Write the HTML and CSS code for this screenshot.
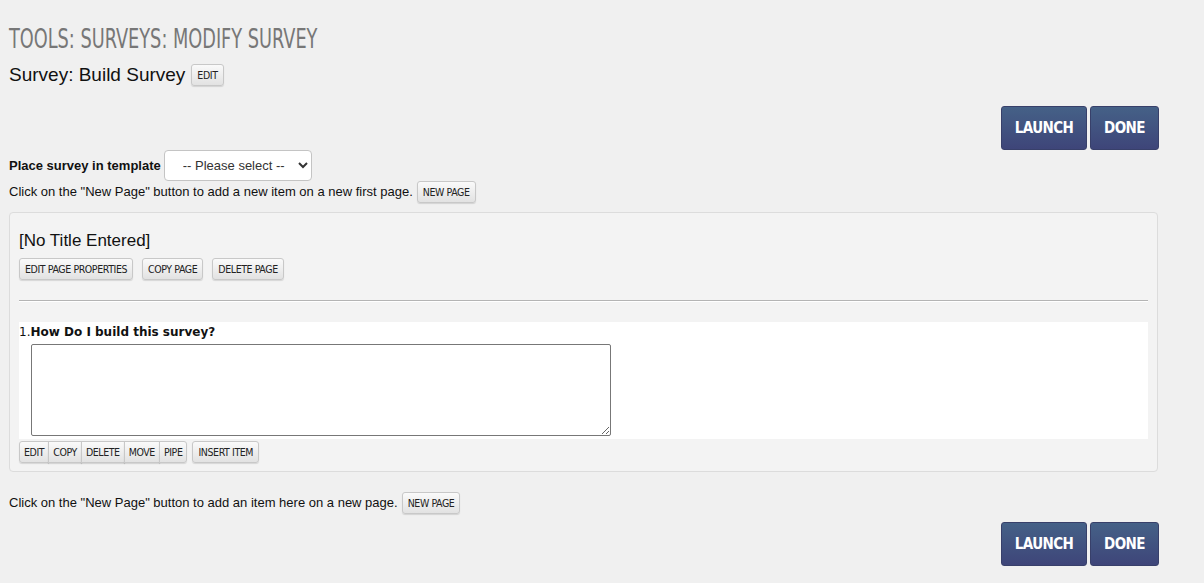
FILE: index.html
```html
<!DOCTYPE html>
<html lang="en">

<head>
    <meta charset="UTF-8">
    <title>Modify Survey</title>
    <link rel="stylesheet" href="styles.css">
</head>

<body>
    <h1 class="page-title"><span>Tools: Surveys: Modify Survey</span></h1>
    <div class="survey-name">
        Survey: Build Survey
        <button class="btn">Edit</button>
    </div>

    <div class="actions">
        <button class="btn-main launch">Launch</button>
        <button class="btn-main done">Done</button>
    </div>

    <div class="template-row">
        <label for="template">Place survey in template</label>
        <select id="template">
            <option value="">-- Please select --</option>
        </select>
    </div>
    <div class="hint">
        Click on the "New Page" button to add a new item on a new first page.
        <button class="btn">New Page</button>
    </div>

    <div class="page-panel">
        <div class="page-title-text">[No Title Entered]</div>
        <div class="page-buttons">
            <button class="btn">Edit Page Properties</button>
            <button class="btn">Copy Page</button>
            <button class="btn">Delete Page</button>
        </div>
        <hr class="divider">

        <div class="item">
            <div class="question"><span class="num">1.</span><b>How Do I build this survey?</b></div>
            <textarea class="answer"></textarea>
        </div>
        <div class="item-buttons">
            <div class="btn-group">
                <button class="btn">Edit</button>
                <button class="btn">Copy</button>
                <button class="btn">Delete</button>
                <button class="btn">Move</button>
                <button class="btn">Pipe</button>
            </div>
            <button class="btn">Insert Item</button>
        </div>
    </div>

    <div class="hint hint-bottom">
        Click on the "New Page" button to add an item here on a new page.
        <button class="btn">New Page</button>
    </div>

    <div class="actions actions-bottom">
        <button class="btn-main launch">Launch</button>
        <button class="btn-main done">Done</button>
    </div>
</body>

</html>
```

FILE: styles.css
```css
body {
    margin: 0;
    padding: 0 9px;
    background-color: #f0f0f0;
    font-family: "Liberation Sans", Arial, sans-serif;
    color: #111;
}

.page-title {
    margin: 0;
    padding-top: 24px;
    font-family: "DejaVu Sans Condensed", sans-serif;
    font-weight: normal;
    font-size: 27px;
    line-height: 30px;
    color: #777;
    text-transform: uppercase;
    white-space: nowrap;
}

.page-title span {
    display: inline-block;
    transform: scaleX(0.73);
    transform-origin: left center;
}

.survey-name {
    margin-top: 9px;
    font-size: 19px;
    line-height: 24px;
    display: flex;
    align-items: center;
    gap: 6px;
}

.btn {
    font-family: "DejaVu Sans Condensed", sans-serif;
    font-size: 10.5px;
    letter-spacing: -0.4px;
    text-transform: uppercase;
    color: #222;
    height: 22px;
    padding: 0 5px;
    border: 1px solid #c8c8c8;
    border-radius: 3px;
    background: linear-gradient(#fafafa, #e2e2e2);
    box-shadow: 0 1px 1px rgba(0, 0, 0, 0.12);
    cursor: pointer;
}

.actions {
    display: flex;
    justify-content: flex-end;
    gap: 3px;
    padding-right: 36px;
    margin-top: 19px;
}

.btn-main {
    font-family: "DejaVu Sans Condensed", sans-serif;
    font-size: 15px;
    font-weight: bold;
    letter-spacing: -0.6px;
    text-transform: uppercase;
    color: #fff;
    height: 44px;
    padding: 0;
    border: 1px solid #38406a;
    border-radius: 3px;
    background: linear-gradient(#456187, #3e4579);
    cursor: pointer;
}

.launch {
    width: 86px;
}

.done {
    width: 69px;
}

.template-row {
    display: flex;
    align-items: center;
    gap: 3px;
    font-size: 13px;
    font-weight: bold;
}

.template-row select {
    width: 148px;
    height: 31px;
    padding: 0 8px 0 14px;
    font-family: "Liberation Sans", Arial, sans-serif;
    font-size: 13px;
    color: #333;
    background: #fff;
    border: 1px solid #c4c4c4;
    border-radius: 4px;
}

.hint {
    display: flex;
    align-items: center;
    gap: 4px;
    font-size: 13px;
    line-height: 22px;
}

.page-panel {
    margin-top: 9px;
    width: 1129px;
    padding: 17px 9px 8px 9px;
    background: #f3f3f3;
    border: 1px solid #dcdcdc;
    border-radius: 4px;
}

.page-title-text {
    font-size: 17px;
    line-height: 22px;
    margin-bottom: 6px;
}

.page-buttons {
    display: flex;
    gap: 9px;
}

.divider {
    margin: 20px 0 20px 0;
    border: 0;
    border-top: 1px solid #b4b4b4;
    border-bottom: 1px solid #fff;
}

.item {
    background: #fff;
    padding: 2px 0 3px 0;
}

.question {
    font-family: "DejaVu Sans", Verdana, sans-serif;
    font-size: 12px;
    line-height: 17px;
    margin-bottom: 3px;
}

.num {
    font-weight: normal;
}

.answer {
    display: block;
    margin-left: 12px;
    width: 580px;
    height: 92px;
    box-sizing: border-box;
    border: 1px solid #777;
    border-radius: 2px;
    resize: both;
}

.item-buttons {
    display: flex;
    gap: 5px;
    margin-top: 2px;
}

.btn-group {
    display: flex;
}

.btn-group .btn {
    border-radius: 0;
    margin-left: -1px;
    padding: 0 4px;
}

.btn-group .btn:first-child {
    margin-left: 0;
    border-radius: 3px 0 0 3px;
}

.btn-group .btn:last-child {
    border-radius: 0 3px 3px 0;
}

.hint-bottom {
    margin-top: 20px;
}

.actions-bottom {
    margin-top: 8px;
}
```
